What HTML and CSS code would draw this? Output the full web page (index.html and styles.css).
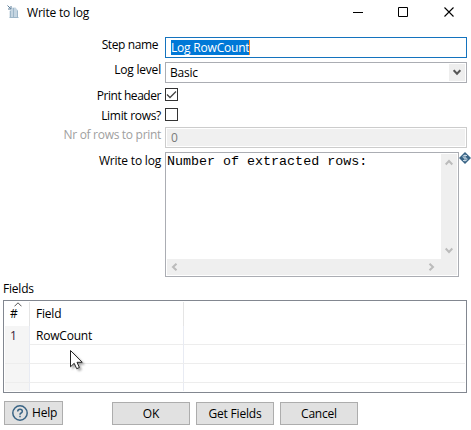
FILE: index.html
```
<!DOCTYPE html>
<html lang="en">
<head>
<meta charset="utf-8">
<title>Write to log</title>
<link rel="stylesheet" href="styles.css">
</head>
<body>
<main class="window">
  <header class="titlebar">
    <svg class="app-icon" width="13" height="14" viewBox="0 0 13 14"><path d="M2.500 12.500V6l3-3.500h3l2.500 3v7z" fill="#c5d5e1"/><path d="M3.500 12V6M6.500 12V3M10.500 12V5.500M2.500 12.500h9" fill="none" stroke="#9db6c8"/><path d="M.5.5l3 3M4 1v3H1" fill="none" stroke="#587b98"/></svg>
    <h1>Write to log</h1>
    <svg class="controls" width="102" height="11" viewBox="0 0 102 11" fill="none" stroke="#000"><path d="M0 5.500h10M45.500.5h9v9h-9z"/><path d="M91.500.5l9 9M100.500.5l-9 9" stroke-width="1.1"/></svg>
  </header>
  <form class="form">
    <label class="r-step">Step name</label>
    <div class="field step"><span class="selected">Log RowCount</span></div>
    <label class="r-level">Log level</label>
    <div class="field combo"><span>Basic</span><span class="drop"><svg width="8" height="7" viewBox="0 0 8 7"><path d="M.7 1.200L4 4.700l3.300-3.500" fill="none" stroke="#555" stroke-width="2"/></svg></span></div>
    <label class="r-header">Print header</label>
    <div class="check"><svg width="11" height="11" viewBox="0 0 11 11"><path d="M1 5.500l3 3L10 2.500" fill="none" stroke="#444" stroke-width="1.300"/></svg></div>
    <label class="r-limit">Limit rows?</label>
    <div class="check"></div>
    <label class="r-rows">Nr of rows to print</label>
    <div class="field disabled"><span>0</span></div>
    <label class="r-log">Write to log</label>
    <div class="log-wrap">
      <div class="log">
        <div class="log-text">Number of extracted rows:</div>
        <div class="vbar">
          <svg width="8" height="7" viewBox="0 0 8 7"><path d="M.7 5.500L4 2l3.300 3.500"/></svg>
          <svg width="8" height="7" viewBox="0 0 8 7"><path d="M.7 1.500L4 5l3.300-3.500"/></svg>
        </div>
        <div class="hbar">
          <svg width="7" height="8" viewBox="0 0 7 8"><path d="M5.500.7L2 4l3.500 3.300"/></svg>
          <svg width="7" height="8" viewBox="0 0 7 8"><path d="M1.500.7L5 4 1.500 7.300"/></svg>
        </div>
      </div>
      <svg class="variable" width="12" height="12" viewBox="0 0 12 12"><path d="M6 0l6 6-6 6-6-6z" fill="#396485"/><path d="M8 3.500H5q-1 0-1 1.200T5 6h2q1 0 1 1.200T7 8.500H4M6 2.500v7" fill="none" stroke="#c7d7e3"/></svg>
    </div>
  </form>
  <h2>Fields</h2>
  <section class="table">
    <div class="thead"><span class="hash">#<svg class="sort" width="8" height="5" viewBox="0 0 8 5"><path d="M.5 4.300L4 .8l3.500 3.500" fill="none" stroke="#555"/></svg></span><span>Field</span><span></span></div>
    <div class="row"><span class="num">1</span><span>RowCount</span><span></span></div>
    <div class="row"><span></span><span></span><span></span></div>
    <div class="row"><span></span><span></span><span></span></div>
    <div class="row last"><span></span><span></span><span></span></div>
  </section>
  <footer class="actions">
    <button class="help"><svg width="16" height="16" viewBox="0 0 16 16" fill="none" stroke="#396485"><circle cx="8" cy="8" r="7.200" stroke-width="1.500"/><path d="M5.700 6.500q0-2.300 2.300-2.300t2.300 2q0 1.200-1.200 1.800T8 9.700M8 10.700v1.500" stroke-width="1.500"/></svg><span>Help</span></button>
    <button>OK</button>
    <button>Get Fields</button>
    <button>Cancel</button>
  </footer>
  <svg class="pointer" width="16" height="23" viewBox="0 0 16 23"><path d="M.5.5v16.300l3.700-3.500 2.500 5.400 2.700-1.200-2.400-5.200h5.200z" fill="#fff" stroke="#222"/></svg>
</main>
</body>
</html>
```
FILE: styles.css
```
* { box-sizing: border-box; }
body {
  margin: 0;
  background: #fff;
  color: #000;
  font: 12px/16px "Open Sans", "Noto Sans", sans-serif;
  letter-spacing: -0.2px;
  white-space: nowrap;
}
svg { display: block; flex: none; }
h1, h2 { margin: 0; font-size: 12px; font-weight: 400; line-height: 16px; }
.window { position: relative; width: 471px; height: 430px; overflow: hidden; }
.titlebar { display: flex; align-items: flex-start; height: 37px; padding: 5px 16px 0 7px; }
.titlebar h1 { margin-left: 7px; }
.controls { margin: 2px 0 0 auto; }
.form {
  display: grid;
  grid-template-columns: 161px 302px;
  grid-template-rows: 25px 26px 20px 19px 25px 128px;
  column-gap: 4px;
}
.form label { text-align: right; }
.r-step { padding-right: 3px; letter-spacing: -0.4px; }
.r-header { letter-spacing: -0.45px; }
.r-limit { letter-spacing: -0.3px; }
.r-rows { color: #a0a0a0; letter-spacing: -0.3px; }
.r-log { padding-top: 1px; }
.field { display: flex; align-items: center; height: 21px; padding-left: 4px; border: 1px solid #abadb3; }
.step { padding-left: 5px; border-color: #1473be; }
.selected { height: 15px; background: #0078d7; color: #fff; line-height: 16px; border-right: 1px solid #ff8728; }
.combo { justify-content: space-between; padding-right: 1px; }
.drop { display: grid; place-items: center; width: 16px; height: 17px; background: #eee; }
.check { width: 13px; height: 13px; border: 1px solid #333; }
.disabled { padding-left: 5px; background: #f0f0f0; border-color: #ccc; box-shadow: inset 0 0 0 1px #fff; color: #7a7a7a; }
.log-wrap { display: flex; align-items: flex-start; }
.log {
  display: grid;
  grid-template: 105px 16px / 274px 16px;
  width: 294px;
  height: 125px;
  padding: 1px;
  border: 1px solid #abadb3;
}
.log-text { font: 13.35px/16px "Liberation Mono", monospace; letter-spacing: 0; }
.vbar, .hbar { display: flex; justify-content: space-between; align-items: center; background: #efefef; fill: none; stroke: #bbb; stroke-width: 2; }
.vbar { flex-direction: column; padding: 5px 0; }
.hbar { grid-column: 1 / 3; padding: 0 22px 0 4px; }
h2 { margin: 1px 0 3px 3px; }
.table { width: 464px; height: 93px; margin-left: 3px; padding: 1px; border: 1px solid #828790; }
.thead, .row { display: grid; grid-template-columns: 25px 154px 1fr; }
.thead { height: 24px; line-height: 24px; }
.thead span { border-right: 1px solid #e5e5e5; padding-left: 6px; }
.row { height: 19px; border-bottom: 1px solid #ededed; line-height: 19px; }
.row span { border-right: 1px solid #e8ebf3; padding-left: 6px; }
.row span:first-child { background: #f5f5f5; }
.thead span:last-child, .row span:last-child { border: 0; }
.row.last { height: 8px; border: 0; }
.thead .hash { position: relative; padding-left: 5px; }
.sort { position: absolute; left: 9px; top: 0; }
.row .num { padding-left: 5px; color: #3a1a3a; }
.actions { display: flex; align-items: flex-end; gap: 6px; height: 32px; padding-left: 4px; }
.actions button {
  width: 78px;
  height: 23px;
  padding: 0;
  border: 1px solid #adadad;
  background: #e1e1e1;
  color: #000;
  font: inherit;
  letter-spacing: inherit;
}
.actions .help { display: flex; align-items: center; gap: 4px; width: 59px; height: 24px; margin-right: 43px; padding-left: 7px; }
.pointer { position: absolute; left: 70px; top: 350px; filter: drop-shadow(2px 2px 1px #0005); }
```
